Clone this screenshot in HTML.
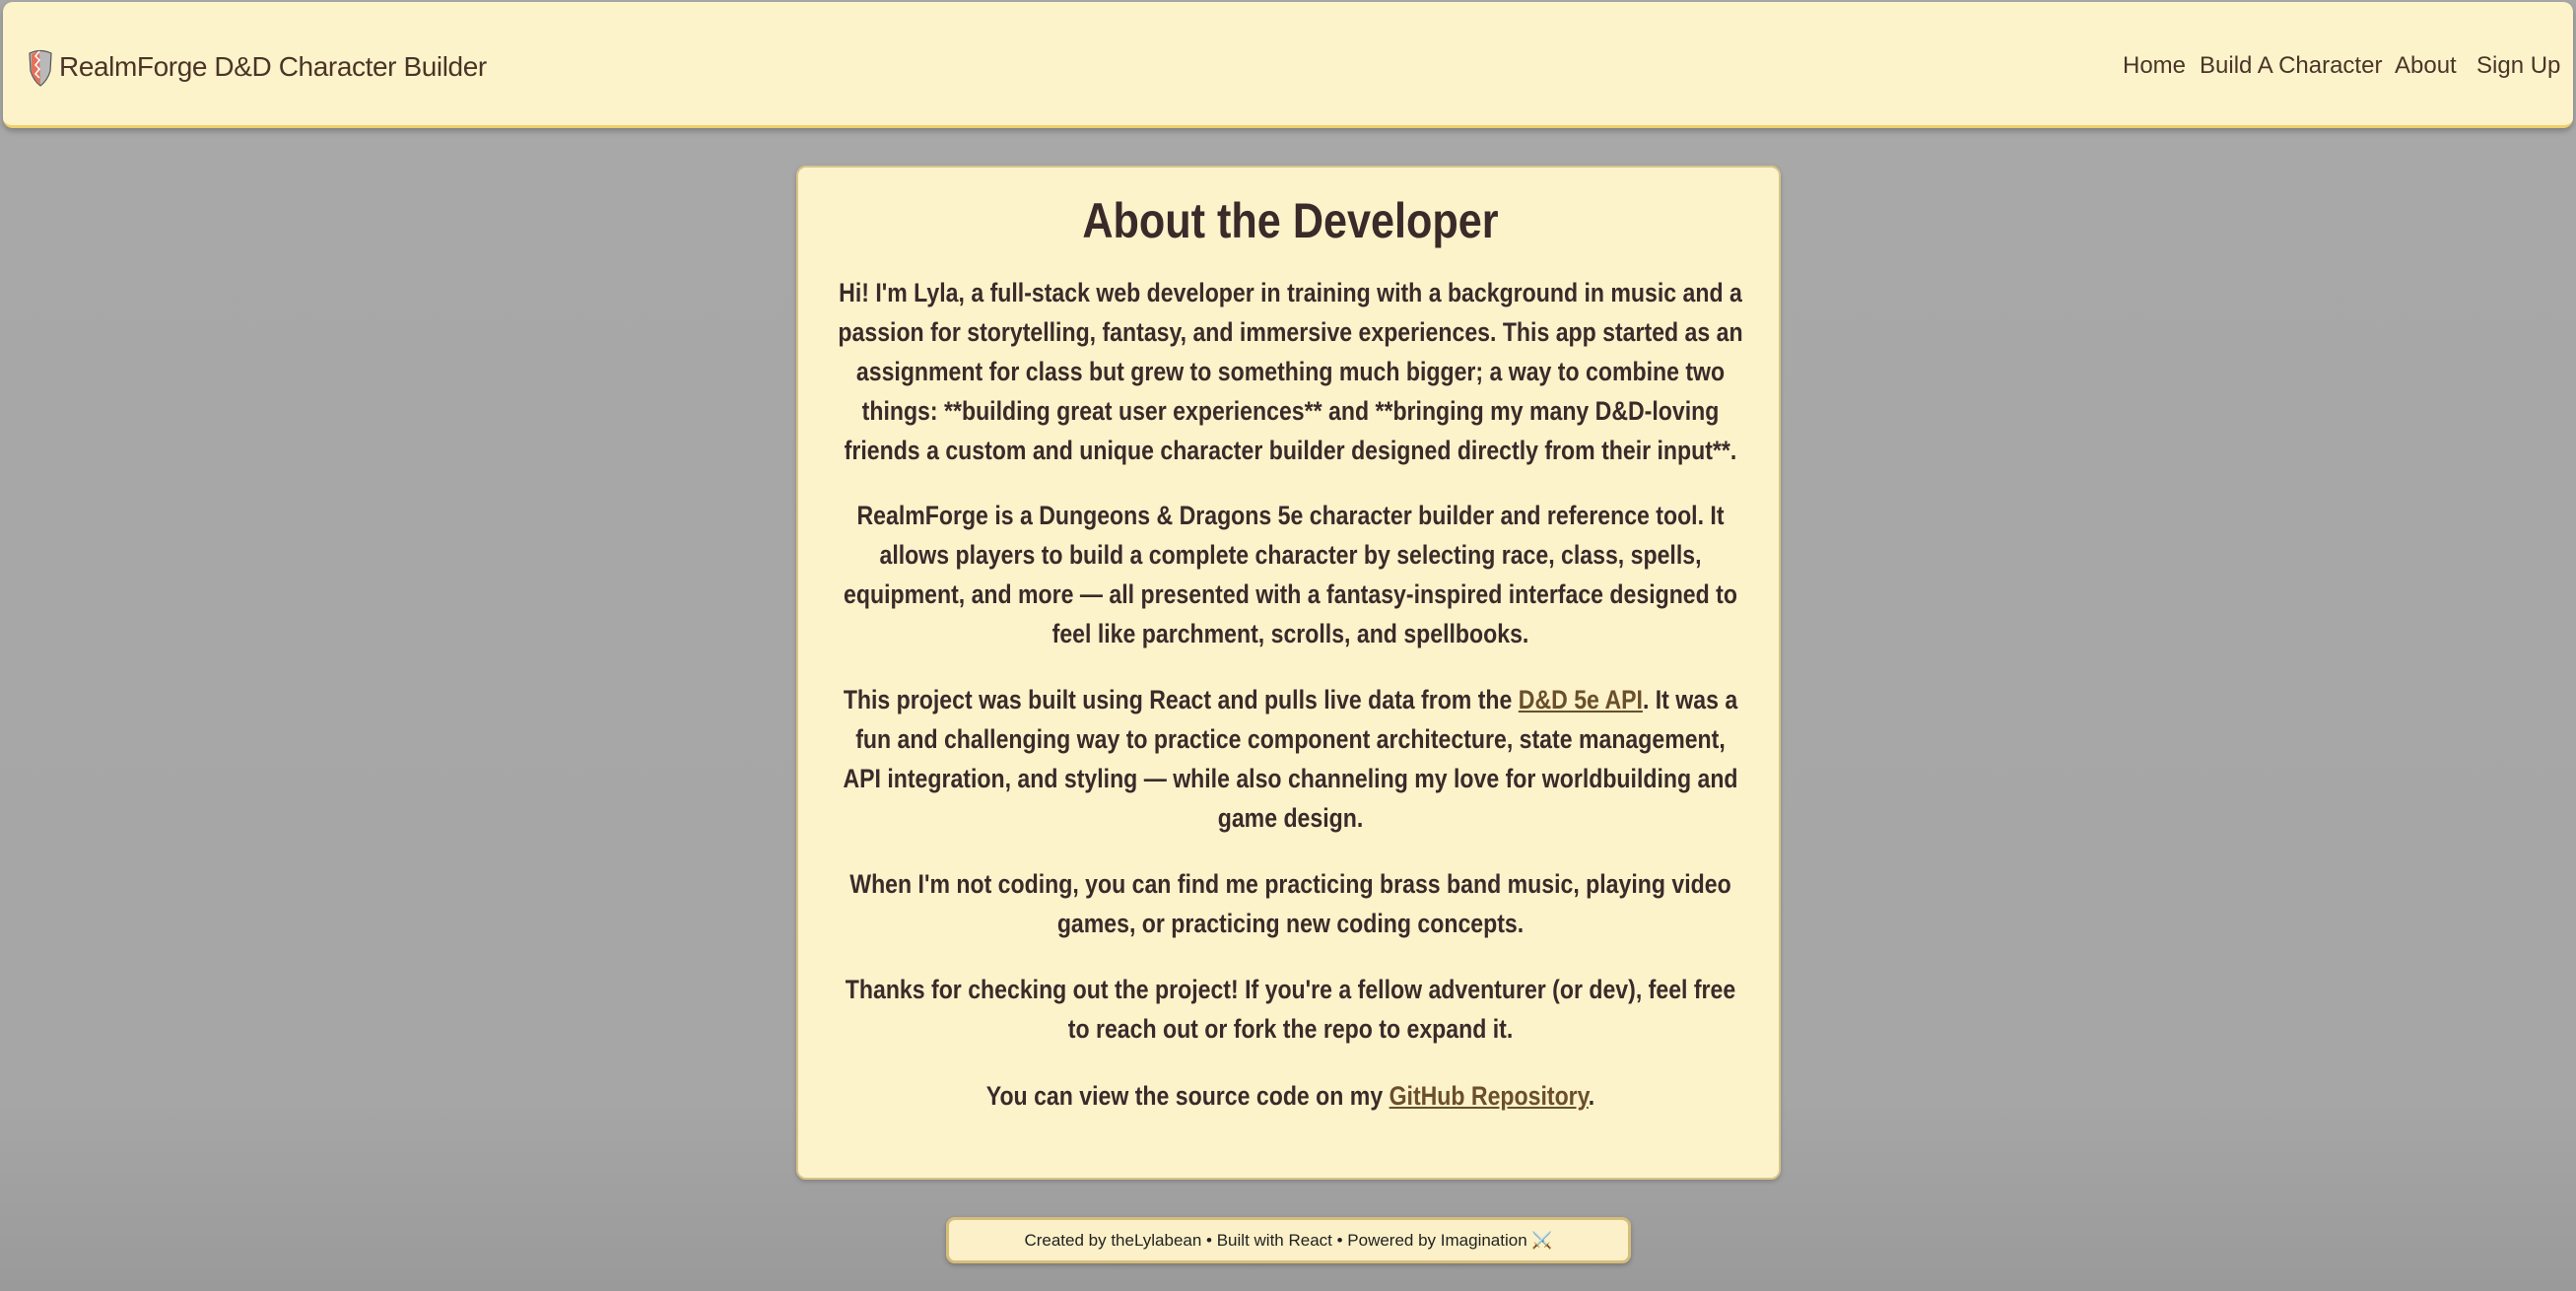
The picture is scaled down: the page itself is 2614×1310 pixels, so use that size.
<!DOCTYPE html>
<html><head><meta charset="utf-8"><style>
*{box-sizing:border-box;margin:0;padding:0}
html,body{width:2614px;height:1310px;overflow:hidden}
body{background:linear-gradient(#a8a8a8 0%,#a6a6a6 85%,#9a9a9a 100%);font-family:"Liberation Sans",sans-serif;color:#3a2b2a;position:relative}
.hdr{position:absolute;left:3px;top:2px;width:2608px;height:128px;background:#fdf3cb;border-radius:10px;border-bottom:3px solid #f0cf6a;box-shadow:0 3px 6px rgba(0,0,0,.25)}
.brand{position:absolute;left:57px;top:50px;font-size:28px;color:#4a3526;white-space:nowrap;letter-spacing:-0.4px}
.shield{position:absolute;left:25px;top:48px}
.nav{position:absolute;top:51px;font-size:24px;color:#4a3526;white-space:nowrap}
.card{position:absolute;left:808px;top:168px;width:999px;height:1029px;background:#fdf3cb;border-radius:10px;border:2px solid #d8c48a;box-shadow:0 2px 5px rgba(0,0,0,.2)}
.inner{position:absolute;left:-200px;width:1399px;top:0;transform:scaleX(.855);transform-origin:center top;text-align:center;white-space:nowrap}
h1{position:absolute;left:0;right:0;top:25px;font-size:50px;line-height:58px;font-weight:900;color:#3a2b2a;transform:scaleX(1.01)}
p{position:absolute;left:0;right:0;font-size:27px;line-height:40px;font-weight:bold}
a{color:#6a4f2a;text-decoration:underline}
.ft{position:absolute;left:960px;top:1235px;width:695px;height:47px;background:#fbf0c8;border:3px solid #d6bd7a;border-radius:9px;box-shadow:0 2px 5px rgba(0,0,0,.25);text-align:center;font-size:17px;line-height:41px;color:#222}
</style></head><body>
<div class="hdr">
<svg class="shield" width="26" height="38" viewBox="0 0 26 38"><path d="M2 4 Q13 -1 24 4 L23 22 Q20 32 13 37 Q6 32 3 22 Z" fill="#b9b9b9" stroke="#555" stroke-width="1.2"/><path d="M4 5 Q8 3 12 2 L13 36 Q6 31 4 22 Z" fill="#e4715a"/><path d="M12 2 l-4 5 4 4 -4 5 4 4 -4 5 4 4" fill="none" stroke="#fff" stroke-width="1.5"/></svg>
<div class="brand">RealmForge D&amp;D Character Builder</div>
<div class="nav" style="left:2151px">Home</div>
<div class="nav" style="left:2229px">Build A Character</div>
<div class="nav" style="left:2427px">About</div>
<div class="nav" style="left:2510px">Sign Up</div>
</div>
<div class="card"><div class="inner">
<h1>About the Developer</h1>
<p style="top:107px">Hi! I'm Lyla, a full-stack web developer in training with a background in music and a<br>passion for storytelling, fantasy, and immersive experiences. This app started as an<br>assignment for class but grew to something much bigger; a way to combine two<br>things: **building great user experiences** and **bringing my many D&amp;D-loving<br>friends a custom and unique character builder designed directly from their input**.</p>
<p style="top:333px"><b style="font-weight:900">RealmForge</b> is a Dungeons &amp; Dragons 5e character builder and reference tool. It<br>allows players to build a complete character by selecting race, class, spells,<br>equipment, and more — all presented with a fantasy-inspired interface designed to<br>feel like parchment, scrolls, and spellbooks.</p>
<p style="top:520px">This project was built using React and pulls live data from the <a>D&amp;D 5e API</a>. It was a<br>fun and challenging way to practice component architecture, state management,<br>API integration, and styling — while also channeling my love for worldbuilding and<br>game design.</p>
<p style="top:707px">When I'm not coding, you can find me practicing brass band music, playing video<br>games, or practicing new coding concepts.</p>
<p style="top:814px">Thanks for checking out the project! If you're a fellow adventurer (or dev), feel free<br>to reach out or fork the repo to expand it.</p>
<p style="top:922px">You can view the source code on my <a>GitHub Repository</a>.</p>
</div></div>
<div class="ft">Created by theLylabean • Built with React • Powered by Imagination ⚔️</div>
</body></html>
